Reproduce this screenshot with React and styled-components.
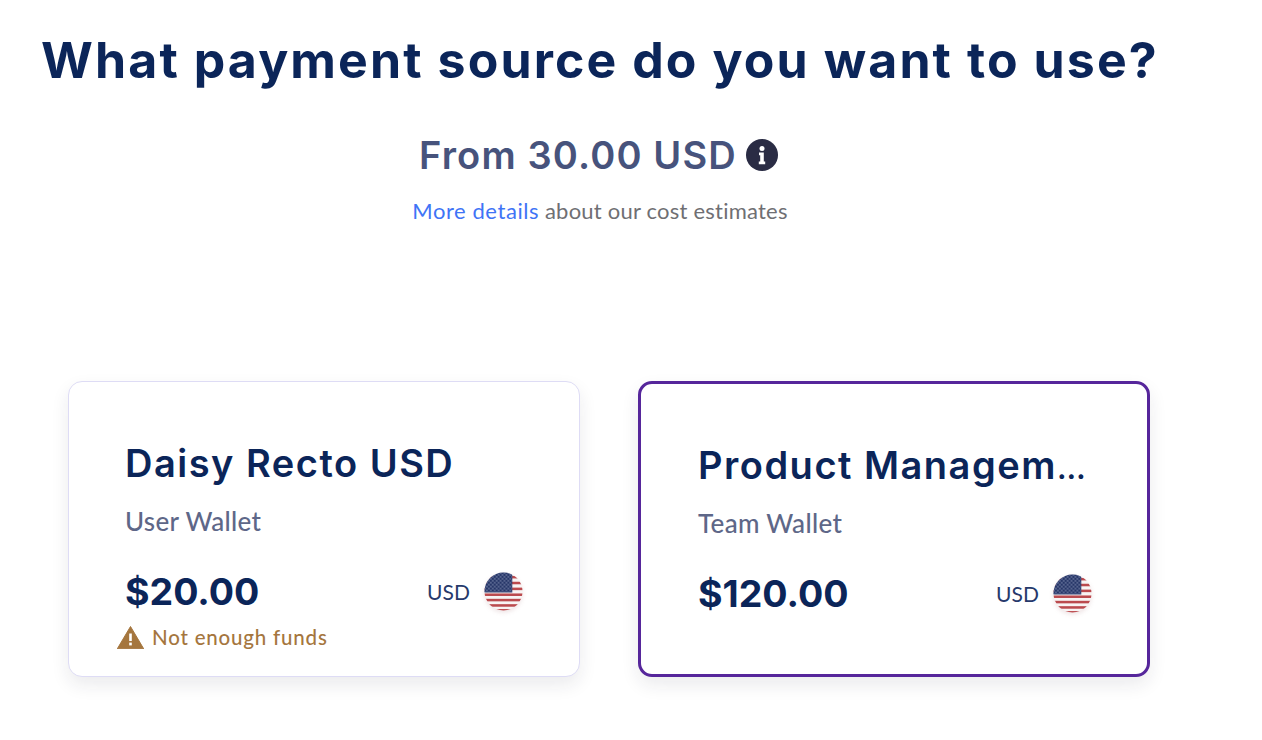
import React from "react";
import styled, { createGlobalStyle } from "styled-components";

const Global = createGlobalStyle`
  html, body { margin: 0; padding: 0; background: #fff; }
  body { font-family: "Lato", "Liberation Sans", sans-serif; font-variant-ligatures: none; }
`;

const Page = styled.div`
  width: 1262px;
  height: 740px;
  overflow: hidden;
  box-sizing: border-box;
  padding-top: 26px;
`;

const Intro = styled.header`
  width: 1200px;
  display: flex;
  flex-direction: column;
  align-items: center;
`;

const Title = styled.h1`
  margin: 0;
  font-family: "Inter", sans-serif;
  font-weight: 700;
  font-size: 50px;
  line-height: 68px;
  letter-spacing: 2.1px;
  color: #0b2559;
  white-space: nowrap;
`;

const Cost = styled.div`
  margin: 36px 3px 0 0;
  display: flex;
  align-items: center;
  gap: 9px;
  height: 50px;
`;

const CostText = styled.span`
  font-family: "Inter", sans-serif;
  font-weight: 600;
  font-size: 38px;
  letter-spacing: 1.15px;
  color: #47537c;
`;

const Note = styled.p`
  margin: 17px 0 0;
  font-size: 22px;
  line-height: 28px;
  letter-spacing: 0.22px;
  color: #6f6f73;
`;

const NoteLink = styled.a`
  color: #3f74f6;
  letter-spacing: 0.56px;
  text-decoration: none;
`;

const Cards = styled.div`
  margin: 156px 0 0 68px;
  display: flex;
  gap: 58px;
`;

const Card = styled.article`
  box-sizing: border-box;
  width: 512px;
  height: 296px;
  background: #fff;
  border: ${(p) => (p.$selected ? "3px solid #56269b" : "1px solid #dedcf5")};
  border-radius: 14px;
  box-shadow: 0 8px 18px rgba(30, 30, 60, 0.09);
  padding: ${(p) => (p.$selected ? "55px 55px 0 57px" : "55px 56px 0 56px")};
  display: flex;
  flex-direction: column;
`;

const Name = styled.h2`
  margin: 0;
  font-family: "Inter", sans-serif;
  font-weight: 600;
  font-size: 38px;
  line-height: 52px;
  letter-spacing: 1.5px;
  color: #0b2559;
  white-space: nowrap;
`;

const Trail = styled.span`
  font-size: 30px;
  line-height: 0;
  letter-spacing: 0;
`;

const Kind = styled.div`
  margin-top: 16px;
  font-size: 26px;
  line-height: 32px;
  font-weight: 500;
  letter-spacing: 0.3px;
  color: #5e6788;
`;

const BalanceRow = styled.div`
  margin-top: 34px;
  display: flex;
  align-items: center;
  justify-content: space-between;
  height: 40px;
`;

const Amount = styled.span`
  font-family: "Inter", sans-serif;
  font-weight: 700;
  font-size: 37.5px;
  color: #0b2559;
`;

const Currency = styled.span`
  display: flex;
  align-items: center;
  gap: 14px;
  font-size: 21px;
  letter-spacing: 0.1px;
  color: #26396b;
`;

const Warning = styled.div`
  margin: 12px 0 0 -8px;
  display: flex;
  align-items: center;
  gap: 8px;
  font-size: 20.5px;
  font-weight: 500;
  letter-spacing: 0.8px;
  line-height: 28px;
  color: #a5763e;
`;

const FlagMark = styled.svg`
  filter: drop-shadow(0 2px 2px rgba(120, 40, 50, 0.12));
`;

const Flag = () => (
  <FlagMark width="39" height="39" viewBox="0 0 40 40" aria-hidden="true">
    <defs>
      <clipPath id="flagCircle">
        <circle cx="20" cy="20" r="19.5" />
      </clipPath>
      <pattern id="stars" width="4" height="4" patternUnits="userSpaceOnUse">
        <circle cx="1" cy="1" r="0.65" fill="#aeb7d4" />
        <circle cx="3" cy="3" r="0.65" fill="#aeb7d4" />
      </pattern>
    </defs>
    <g clipPath="url(#flagCircle)">
      <rect width="40" height="40" fill="#f8f4f4" />
      {[4, 10, 16, 22, 27.5, 33, 38].map((y) => (
        <rect key={y} x="0" y={y} width="40" height="2.6" fill="#bb4a4e" />
      ))}
      <rect width="29" height="21" fill="#263668" />
      <rect width="29" height="21" fill="url(#stars)" />
    </g>
  </FlagMark>
);

const InfoIcon = () => (
  <svg width="32" height="32" viewBox="0 0 32 32" aria-hidden="true">
    <circle cx="16" cy="16" r="16" fill="#2a2c44" />
    <circle cx="16" cy="9.4" r="2.5" fill="#fff" />
    <path d="M13 13.6h4.8v9h1.4v2.6h-6.4v-2.6h1.4v-6.4h-1.2z" fill="#fff" />
  </svg>
);

const WarningIcon = () => (
  <svg width="27" height="23" viewBox="0 0 27 23" aria-hidden="true">
    <path
      d="M13.5 0.5 L26.7 22.8 H0.3 Z"
      fill="#a5763e"
      stroke="#a5763e"
      strokeLinejoin="round"
    />
    <rect x="12.2" y="7.5" width="2.6" height="7.5" fill="#fff" />
    <rect x="12.2" y="16.6" width="2.6" height="2.8" fill="#fff" />
  </svg>
);

const wallets = [
  { name: "Daisy Recto USD", kind: "User Wallet", amount: "$20.00", warn: true },
  { name: "Product Managem", cut: true, kind: "Team Wallet", amount: "$120.00", selected: true },
];

export default function App() {
  return (
    <Page>
      <Global />
      <Intro>
        <Title>What payment source do you want to use?</Title>
        <Cost>
          <CostText>From 30.00 USD</CostText>
          <InfoIcon />
        </Cost>
        <Note>
          <NoteLink href="#">More details</NoteLink> about our cost estimates
        </Note>
      </Intro>
      <Cards>
        {wallets.map((w) => (
          <Card key={w.name} $selected={w.selected}>
            <Name>
              {w.name}
              {w.cut && <Trail>…</Trail>}
            </Name>
            <Kind>{w.kind}</Kind>
            <BalanceRow>
              <Amount>{w.amount}</Amount>
              <Currency>
                USD
                <Flag />
              </Currency>
            </BalanceRow>
            {w.warn && (
              <Warning>
                <WarningIcon />
                Not enough funds
              </Warning>
            )}
          </Card>
        ))}
      </Cards>
    </Page>
  );
}
